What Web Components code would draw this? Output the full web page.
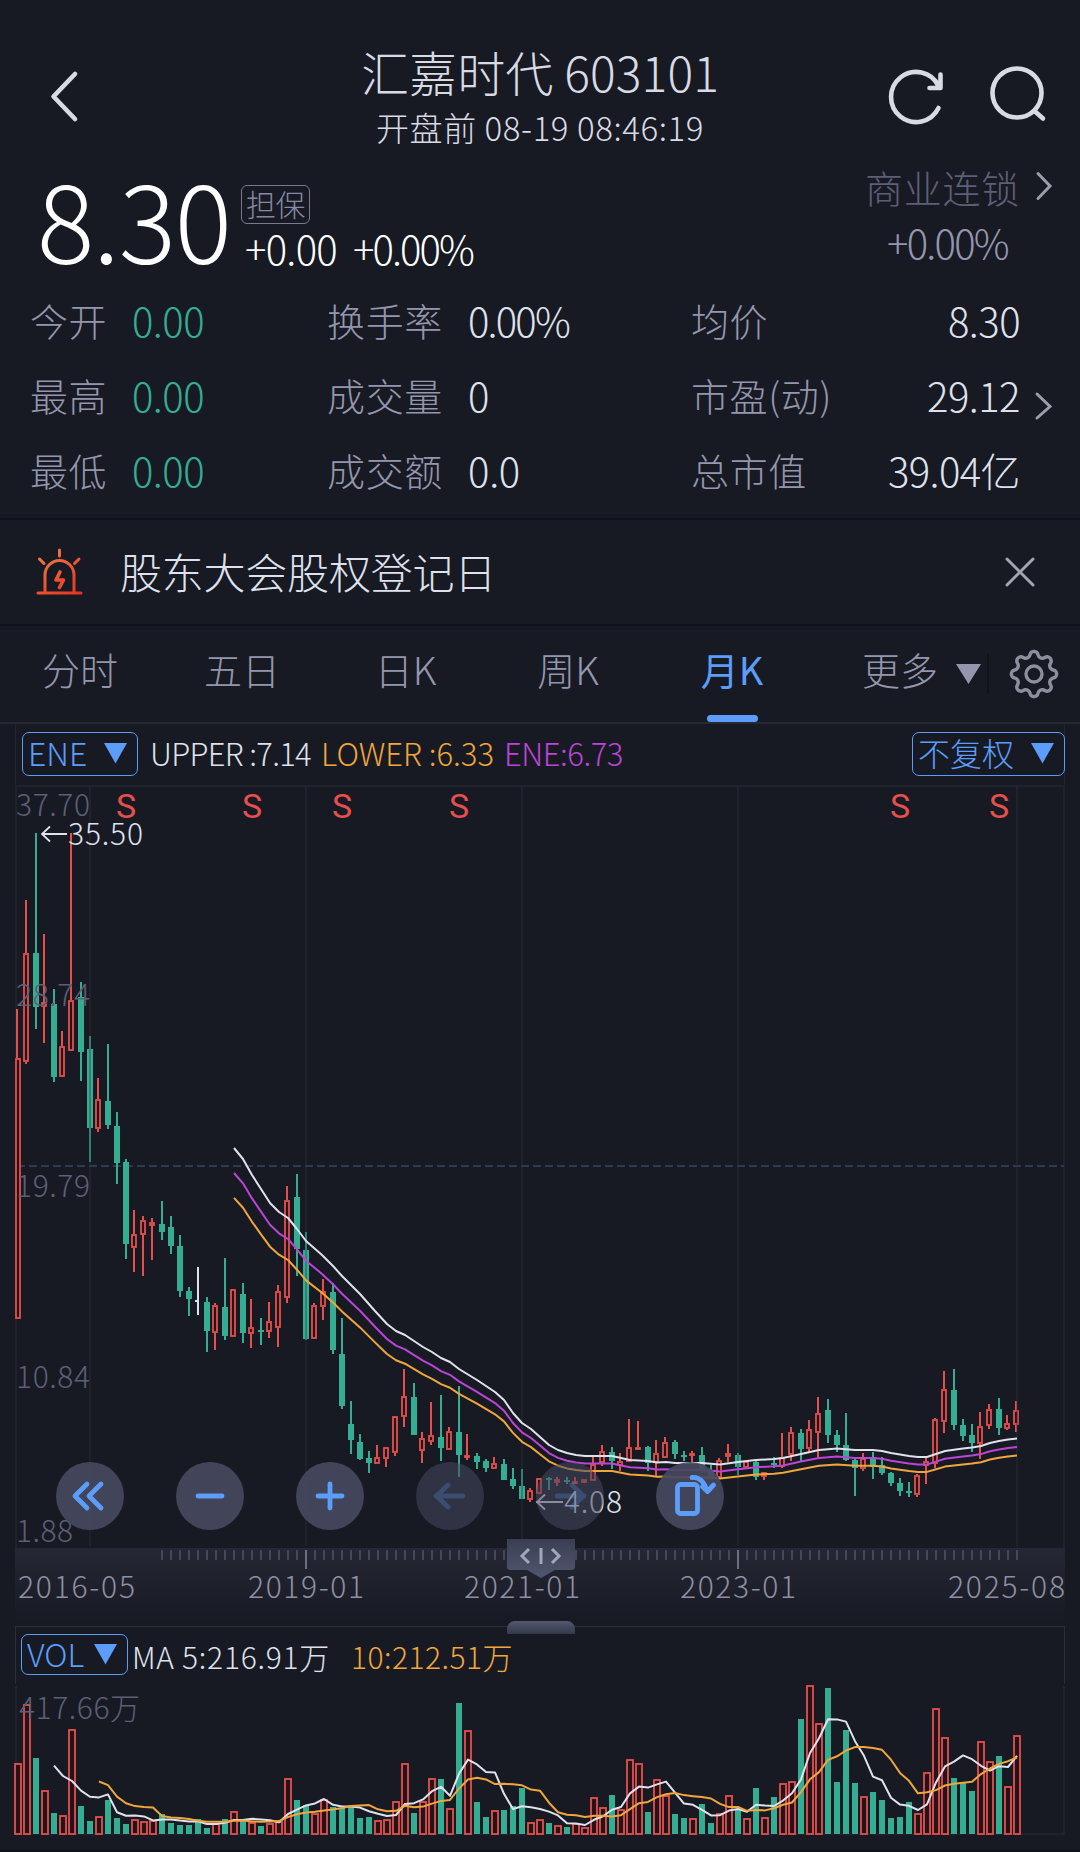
<!DOCTYPE html>
<html lang="zh-CN">
<head>
<meta charset="utf-8">
<title>汇嘉时代 603101</title>
<style>
    html, body {
        margin: 0;
        background: #171a23;
    }
    body {
        width: 1080px;
        height: 1852px;
        overflow: hidden;
        color: #dfe1ec;
        font-family: "Noto Sans CJK SC", sans-serif;
        font-weight: 300;
        --bg: #171a23;
        --muted: #9496ad;
        --dim: #5d5f76;
        --blue: #5c9dfa;
        --red: #e5504d;
        --green: #34ad92;
        --orange: #efa63c;
        --purple: #bb45d6;
    }
</style>
</head>
<body>
<stock-page></stock-page>

<script>
// Text that is tracked in or out until it takes the given width
class FitText extends HTMLElement {
    constructor() {
        super();
        this.attachShadow({ mode: "open" });
        this.shadowRoot.innerHTML = /*html*/ `
            <style>
                :host { display: inline-block; white-space: nowrap; line-height: 1; flex: none; }
                span { display: inline-block; white-space: pre; }
            </style>
            <span><slot></slot></span>
        `;
    }

    connectedCallback() {
        const width = parseFloat(this.getAttribute("width"));
        if (!width) return;
        const span = this.shadowRoot.querySelector("span");
        const size = parseFloat(this.getAttribute("size"));
        if (size) this.style.fontSize = size + "px";
        const natural = span.getBoundingClientRect().width;
        const gap = (width - natural) / this.textContent.length;
        span.style.letterSpacing = gap + "px";
        this.style.width = width + "px";
    }
}
customElements.define("fit-text", FitText);

class QuoteHeader extends HTMLElement {
    constructor() {
        super();
        this.attachShadow({ mode: "open" });
        this.shadowRoot.innerHTML = /*html*/ `
            <style>
                :host {
                    display: grid;
                    grid-template-columns: 270px 1fr 270px;
                    height: 160px;
                    color: #d8dae4;
                }
                svg { fill: none; stroke: currentColor; stroke-width: 4.6; stroke-linecap: round; stroke-linejoin: round; display: block; }
                .back { padding: 66px 0 0 44px; }
                .titles { display: flex; flex-direction: column; align-items: center; padding-top: 47px; gap: 16px; }
                .tools { display: flex; padding: 62px 0 0 72px; gap: 32px; }
            </style>
            <div class="back"><svg width="40" height="62" viewBox="0 0 40 62"><path d="M31 8 9.5 30.500 31 53"/></svg></div>
            <div class="titles">
                <fit-text size="48" width="358"><slot name="title"></slot></fit-text>
                <fit-text size="33" width="328"><slot name="time"></slot></fit-text>
            </div>
            <div class="tools">
                <svg width="70" height="70" viewBox="0 0 70 70"><path d="M56.500 46A25 25 0 1 1 56.500 24M58.500 12.500V26H47.500"/></svg>
                <svg width="70" height="70" viewBox="0 0 70 70"><circle cx="33" cy="31" r="24.500"/><path d="M50.500 49 59 56.500"/></svg>
            </div>
        `;
    }

    connectedCallback() {
        // the slotted text decides the width, so measure it from here
        this.shadowRoot.querySelectorAll("fit-text").forEach((fit) => {
            const slot = fit.querySelector("slot");
            const text = slot.assignedNodes().map((node) => node.textContent).join("");
            fit.textContent = text;
            fit.connectedCallback();
        });
    }
}
customElements.define("quote-header", QuoteHeader);

class PriceSummary extends HTMLElement {
    constructor() {
        super();
        this.attachShadow({ mode: "open" });
        this.shadowRoot.innerHTML = /*html*/ `
            <style>
                :host { display: flex; height: 126px; color: #fff; }
                .price { margin: 4px 0 0 37px; width: 204px; }
                .change { flex: 1; padding-top: 25px; }
                .tag {
                    display: inline-flex; align-items: center; justify-content: center;
                    box-sizing: border-box; width: 69px; height: 39px; padding-bottom: 3px;
                    border: 1.5px solid #787a92; border-radius: 6px; color: #8688a0;
                }
                .diff { display: flex; gap: 16px; padding: 4px 0 0 4px; }
                .sector { width: 215px; display: grid; grid-template-columns: 158px 1fr; align-content: start; padding-top: 8px; row-gap: 14px; }
                .name { color: var(--dim); }
                .rate { color: var(--muted); padding-left: 22px; }
                svg { fill: none; stroke: #9c9da9; stroke-width: 3; stroke-linecap: round; }
            </style>
            <div class="price"><fit-text size="107" width="194">8.30</fit-text></div>
            <div class="change">
                <div class="tag"><fit-text size="30" width="59">担保</fit-text></div>
                <div class="diff"><fit-text size="40" width="92">+0.00</fit-text><fit-text size="40" width="120">+0.00%</fit-text></div>
            </div>
            <div class="sector">
                <div class="name"><fit-text size="38" width="155">商业连锁</fit-text></div>
                <svg width="40" height="40"><path d="M15 5.500 27 18 15 30.500"/></svg>
                <div class="rate"><fit-text size="40" width="121">+0.00%</fit-text></div>
            </div>
        `;
    }
}
customElements.define("price-summary", PriceSummary);

class StatCell extends HTMLElement {
    constructor() {
        super();
        this.attachShadow({ mode: "open" });
    }

    connectedCallback() {
        const get = (name) => this.getAttribute(name) || "";
        this.shadowRoot.innerHTML = /*html*/ `
            <style>
                :host { display: flex; align-items: center; box-sizing: border-box; height: 75px; padding-bottom: 5px; }
                .label { color: var(--muted); width: ${get("label-box")}px; }
                .value { color: ${get("color") || "#dfe1ec"}; }
                :host([end]) { justify-content: space-between; }
            </style>
            <div class="label"><fit-text size="38" width="${get("label-width")}">${get("label")}</fit-text></div>
            <div class="value"><fit-text size="40" width="${get("value-width")}">${get("value")}</fit-text></div>
        `;
    }
}
customElements.define("stat-cell", StatCell);

class StatGrid extends HTMLElement {
    constructor() {
        super();
        this.attachShadow({ mode: "open" });
        this.shadowRoot.innerHTML = /*html*/ `
            <style>
                :host {
                    display: grid;
                    grid-template-columns: 297px 363px 330px 1fr;
                    height: 235px;
                    padding-left: 30px;
                    box-sizing: border-box;
                    align-content: start;
                    border-bottom: 2px solid #10131a;
                }
                .open { grid-column: 4; grid-row: 1 / 4; padding: 103px 0 0 11px; }
                svg { fill: none; stroke: #9c9da9; stroke-width: 3; stroke-linecap: round; }
            </style>
            <slot></slot>
            <div class="open"><svg width="40" height="40"><path d="M6 5 19 17.500 6 29"/></svg></div>
        `;
    }
}
customElements.define("stat-grid", StatGrid);

class EventNotice extends HTMLElement {
    constructor() {
        super();
        this.attachShadow({ mode: "open" });
        this.shadowRoot.innerHTML = /*html*/ `
            <style>
                :host {
                    display: flex; align-items: center; box-sizing: border-box;
                    height: 106px; padding: 0 45px 0 36px;
                    border-bottom: 2px solid #10131a;
                }
                .text { flex: 1; padding-left: 36px; }
                svg { fill: none; stroke-linecap: round; stroke-linejoin: round; display: block; }
            </style>
            <svg width="48" height="50" viewBox="0 0 48 50" stroke="url(#g)" stroke-width="3">
                <defs><linearGradient id="g" gradientUnits="userSpaceOnUse" x1="8" y1="4" x2="40" y2="48">
                    <stop offset="0" stop-color="#ee7c45"/><stop offset="1" stop-color="#e8341f"/>
                </linearGradient></defs>
                <path d="M2 46H45M9 46V28A14.500 14.500 0 0 1 38 28V46M23.500 3V9M3.500 12 8 16.500M43 12 38.500 16.500"/>
                <path d="M24 25 20 33H27.500L23.500 40.500" stroke-width="3.600"/>
            </svg>
            <div class="text"><fit-text size="42" width="376">股东大会股权登记日</fit-text></div>
            <svg width="30" height="30" stroke="#a3a4b1" stroke-width="3"><path d="M2 2 28 28M28 2 2 28"/></svg>
        `;
    }
}
customElements.define("event-notice", EventNotice);

class PeriodTab extends HTMLElement {
    constructor() {
        super();
        this.attachShadow({ mode: "open" });
        this.shadowRoot.innerHTML = /*html*/ `
            <style>
                :host { display: flex; flex-direction: column; align-items: center; justify-content: space-between; color: var(--muted); padding-top: 24px; box-sizing: border-box; height: 96px; font-size: 38px; line-height: 1; }
                :host([active]) { color: var(--blue); font-weight: 400; }
                i { width: 51px; height: 7px; border-radius: 3.5px; }
                :host([active]) i { background: var(--blue); }
            </style>
            <span><slot></slot></span><i></i>
        `;
    }
}
customElements.define("period-tab", PeriodTab);

class PeriodTabs extends HTMLElement {
    constructor() {
        super();
        this.attachShadow({ mode: "open" });
        // eight round teeth on a ring
        let gear = "";
        for (let i = 0; i <= 160; i++) {
            const angle = (i / 160) * Math.PI * 2;
            const wave = Math.cos(angle * 8);
            const r = 20 + 2.600 * Math.sign(wave) * Math.pow(Math.abs(wave), 0.600);
            gear += (i ? "L" : "M") + (26 + r * Math.sin(angle)).toFixed(2) + " " + (26 - r * Math.cos(angle)).toFixed(2);
        }
        this.shadowRoot.innerHTML = /*html*/ `
            <style>
                :host { display: grid; grid-template-columns: 162px 162px 165px 160px 168px 171px 1fr; height: 97px; margin-left: -1px; }
                .more { display: flex; padding-top: 24px; padding-left: 46px; gap: 18px; color: var(--muted); }
                .more svg { margin-top: 14px; }
                .set { display: flex; align-items: center; padding-left: 0; gap: 19px; height: 95px; }
                .bar { width: 2px; height: 41px; background: #10131a; }
            </style>
            <slot></slot>
            <div class="more"><fit-text size="38" width="76">更多</fit-text><svg width="25" height="21"><path fill="#9496ad" d="M0 0H25L12.500 20Z"/></svg></div>
            <div class="set"><div class="bar"></div>
                <svg width="52" height="52" fill="none" stroke="#8d8f9e" stroke-width="3.400" stroke-linejoin="round"><path d="${gear}Z"/><circle cx="26" cy="26" r="8"/></svg>
            </div>
        `;
    }
}
customElements.define("period-tabs", PeriodTabs);

class PickerButton extends HTMLElement {
    constructor() {
        super();
        this.attachShadow({ mode: "open" });
        this.shadowRoot.innerHTML = /*html*/ `
            <style>
                :host {
                    display: inline-flex; align-items: center; justify-content: space-between;
                    box-sizing: border-box; height: 44px; padding: 0 10px 0 5px;
                    border: 1.5px solid var(--blue); border-radius: 7px;
                    color: var(--blue); font-size: 32px; line-height: 1; white-space: nowrap;
                }
                span { padding-bottom: 4px; }
            </style>
            <span><slot></slot></span>
            <svg width="23" height="21"><path fill="#5c9dfa" d="M0 0H23L11.500 20.500Z"/></svg>
        `;
    }
}
customElements.define("picker-button", PickerButton);

// high, body top, body bottom, low as plot rows; r = up, g = down, w = flat
const candles = `
r1009,1058,1319,1319 r900,953,1062,1064 g833,953,1007,1029 r934,1002,1007,1043 g989,1004,1077,1082 r1031,1046,1077,1077
r833,1000,1051,1051 g982,997,1052,1081 g1036,1049,1128,1162 r1078,1099,1129,1132 g1044,1101,1125,1129 g1112,1126,1163,1184
g1159,1162,1244,1259 r1210,1234,1248,1272 r1216,1220,1235,1276 r1218,1222,1226,1260 g1201,1224,1232,1240 g1216,1227,1246,1254
g1235,1246,1291,1297 g1287,1291,1299,1316 w1267,1300,1302,1315 g1297,1302,1331,1352 r1303,1305,1333,1350 g1258,1307,1336,1340
r1289,1289,1337,1337 g1283,1294,1333,1343 r1299,1327,1334,1348 g1318,1330,1331,1345 r1302,1321,1332,1338 r1285,1291,1328,1347
r1186,1200,1298,1303 g1174,1197,1249,1276 g1232,1250,1339,1340 r1303,1305,1339,1339 r1279,1291,1307,1320 g1283,1292,1350,1354
g1318,1354,1406,1409 g1401,1424,1440,1454 g1434,1442,1459,1460 g1451,1458,1463,1473 r1445,1457,1464,1464 r1447,1447,1459,1467
r1416,1416,1453,1456 r1369,1396,1417,1427 g1383,1397,1435,1435 r1432,1438,1451,1463 r1402,1435,1442,1445 g1395,1437,1448,1461
r1427,1431,1450,1450 g1386,1432,1455,1477 r1434,1455,1457,1460 g1453,1456,1462,1469 g1459,1461,1468,1472 r1457,1463,1469,1469
g1459,1464,1480,1480 g1468,1479,1486,1489 g1469,1486,1499,1499 r1488,1490,1500,1502 r1478,1478,1494,1494 g1477,1478,1479,1490
r1477,1479,1483,1486 g1477,1480,1481,1484 r1477,1481,1482,1484 r1479,1479,1483,1483 r1456,1464,1481,1481 r1445,1451,1463,1466
g1447,1452,1461,1469 r1453,1461,1466,1471 r1419,1447,1462,1462 r1421,1447,1450,1450 g1446,1447,1463,1471 r1440,1453,1463,1477
r1437,1442,1458,1458 g1440,1442,1454,1459 g1451,1455,1456,1461 r1451,1453,1456,1464 g1447,1455,1470,1473 g1465,1470,1477,1477
r1458,1460,1478,1478 r1444,1453,1457,1462 g1453,1455,1467,1475 r1461,1461,1468,1468 g1461,1462,1477,1480 r1472,1472,1477,1480
g1457,1463,1464,1468 r1433,1457,1467,1468 r1427,1432,1455,1461 g1429,1433,1449,1461 r1420,1429,1449,1452 r1397,1413,1433,1459
g1399,1410,1435,1443 g1430,1435,1445,1452 g1413,1445,1460,1461 g1458,1460,1468,1496 r1453,1458,1469,1471 g1452,1457,1467,1479
g1457,1465,1473,1475 g1472,1473,1483,1486 g1478,1483,1491,1496 g1482,1491,1493,1497 r1474,1475,1495,1497 r1457,1461,1466,1484
r1418,1419,1464,1468 r1371,1389,1422,1433 g1369,1390,1425,1430 g1419,1425,1436,1441 g1424,1435,1443,1452 r1412,1426,1444,1459
r1404,1409,1426,1429 g1398,1409,1428,1435 r1415,1423,1429,1430 r1401,1410,1425,1432`.trim().split(/\s+/).map((item) => {
    const [high, top, bottom, low] = item.slice(1).split(",").map(Number);
    return { kind: item[0], high, top, bottom, low };
});

const volumes = [
    71, 130, 76, 44, 21, 19, 105, 28, 13, 18, 34, 16, 10, 15, 13, 14, 20, 11, 9, 9, 15, 6, 11, 15, 23, 15, 12, 8,
    11, 13, 56, 34, 29, 21, 35, 27, 26, 28, 16, 17, 14, 15, 33, 71, 21, 33, 56, 55, 26, 131, 104, 32, 17, 24, 24, 28,
    46, 12, 15, 11, 9, 7, 11, 7, 37, 27, 39, 25, 75, 71, 22, 55, 39, 20, 16, 16, 30, 11, 21, 39, 24, 16, 46, 17,
    37, 51, 53, 115, 149, 111, 146, 52, 104, 51, 38, 42, 34, 16, 17, 32, 21, 62, 126, 97, 56, 52, 43, 93, 73, 78, 48, 99
];

// upper ENE band; the other two follow from it
const upperBand = [
    [234, 1148], [243, 1159], [252, 1175], [261, 1189], [270, 1203], [279, 1212], [288, 1218], [297, 1229], [306, 1241],
    [322, 1255], [333, 1266], [342, 1276], [351, 1285], [360, 1294], [375, 1311], [387, 1324], [396, 1331], [405, 1335],
    [423, 1347], [432, 1352], [441, 1358], [450, 1362], [459, 1369], [477, 1380], [495, 1392], [504, 1400], [513, 1413],
    [522, 1423], [531, 1429], [540, 1437], [549, 1445], [558, 1450], [567, 1453], [576, 1455], [585, 1456], [612, 1456],
    [621, 1458], [630, 1460], [648, 1461], [657, 1462.5], [666, 1462], [675, 1463], [702, 1463], [720, 1464.5],
    [738, 1462], [756, 1460], [774, 1459], [783, 1458], [801, 1454], [819, 1450], [837, 1448.5], [855, 1450],
    [873, 1450], [882, 1451], [891, 1453], [909, 1456], [918, 1457], [927, 1457], [936, 1454], [945, 1451],
    [963, 1448.5], [972, 1447.5], [981, 1446], [990, 1443], [999, 1441], [1008, 1439.5], [1017, 1438.5]
];

const STEP = 9;
const FIRST = 18;
const centre = (i) => FIRST + i * STEP;
const toPrice = (y) => 35.5 - (y - 833) / 21.29;
const toRow = (price) => 833 + (35.5 - price) * 21.29;
const line = (points, color) =>
    `<polyline points="${points.map((p) => p.join(",")).join(" ")}" fill="none" stroke="${color}" stroke-width="2" stroke-linejoin="round"/>`;
const label = (x, y, width, text, color, size = 30) =>
    `<text x="${x}" y="${y}" textLength="${width}" fill="${color}" font-size="${size}">${text}</text>`;

class RoundButton extends HTMLElement {
    constructor() {
        super();
        this.attachShadow({ mode: "open" });
    }

    connectedCallback() {
        const icons = {
            first: "M31 22 19 34 31 46M45 22 33 34 45 46",
            minus: "M22 34H46",
            plus: "M22 34H46M34 22V46",
            left: "M47 34H20M32 23 20.500 34 32 45",
            right: "M21 34H48M36 23 47.500 34 36 45",
            rotate: "M24.500 22.500H38.500A3 3 0 0 1 41.500 25.500V48.500A3 3 0 0 1 38.500 51.500H24.500A3 3 0 0 1 21.500 48.500V25.500A3 3 0 0 1 24.500 22.500ZM36 15.500Q46.500 14.500 51 29M46.500 24.500 51.500 29.500 57.500 23"
        };
        this.shadowRoot.innerHTML = /*html*/ `
            <style>
                :host { display: block; width: 68px; height: 68px; border-radius: 50%; background: rgba(70, 73, 94, 0.92); }
                :host([disabled]) { background: rgba(70, 73, 94, 0.55); }
                svg { display: block; fill: none; stroke: var(--blue); stroke-width: 4.800; stroke-linecap: round; stroke-linejoin: round; }
                :host([disabled]) svg { opacity: 0.25; }
            </style>
            <svg width="68" height="68"><path d="${icons[this.getAttribute("icon")]}"/></svg>
        `;
    }
}
customElements.define("round-button", RoundButton);

class KlineChart extends HTMLElement {
    constructor() {
        super();
        this.attachShadow({ mode: "open" });
        this.shadowRoot.innerHTML = /*html*/ `
            <style>
                :host { display: block; height: 824px; border-top: 2px solid #262934; margin-top: -1px; position: relative; }
                .legend { display: flex; align-items: center; box-sizing: border-box; height: 62px; margin: 0 15px; padding: 0 0 2px 6px; border: 1px solid #222530; border-top: 0; border-right-width: 1px; }
                .legend picker-button:first-child { width: 116px; margin-right: 12px; }
                .legend picker-button:last-child { width: 153px; margin-left: auto; margin-right: -1px; }
                .legend fit-text { margin: 0 10px 2px 0; }
                .plot { display: block; overflow: visible; }
                .tools { position: absolute; left: 56px; top: 738px; display: flex; gap: 52px; }
            </style>
            <div class="legend">
                <picker-button>ENE</picker-button>
                <fit-text size="31" width="161">UPPER :7.14</fit-text>
                <fit-text size="31" width="173" style="color: var(--orange)">LOWER :6.33</fit-text>
                <fit-text size="31" width="119" style="color: var(--purple)">ENE:6.73</fit-text>
                <picker-button>不复权</picker-button>
            </div>
            <svg class="plot" width="1080" height="762" viewBox="0 786 1080 762">${this.draw()}</svg>
            <div class="tools">
                <round-button icon="first"></round-button>
                <round-button icon="minus"></round-button>
                <round-button icon="plus"></round-button>
                <round-button icon="left" disabled></round-button>
                <round-button icon="right" disabled></round-button>
                <round-button icon="rotate"></round-button>
            </div>
        `;
    }

    draw() {
        let out = `<g stroke="#20232e" stroke-width="2"><path d="M15 786H1065M16 786V1548M1064 786V1548"/></g>`;
        out += `<path d="M17 1166H1064" stroke="#2d3a52" stroke-width="2" stroke-dasharray="8 4"/>`;
        candles.forEach((c, i) => {
            const x = centre(i);
            if (c.kind === "g") {
                const h = Math.max(c.bottom - c.top, 2);
                out += `<path fill="#34ad92" d="M${x - 1} ${c.high}h2V${c.low}h-2ZM${x - 3} ${c.top}h6v${h}h-6Z"/>`;
            } else if (c.kind === "w") {
                out += `<path fill="#dfe1ec" d="M${x - 1} ${c.high}h2V${c.low}h-2ZM${x - 3} ${c.top}h3v2h-3Z"/>`;
            } else {
                const h = Math.max(c.bottom - c.top - 2, 1);
                const left = i ? x - 3 : x - 2;
                out += `<path fill="#e5504d" d="M${x - 2} ${c.high}h2V${c.top}h-2ZM${x - 2} ${c.bottom}h2V${c.low}h-2Z"/>`;
                out += `<rect x="${left}" y="${c.top + 1}" width="4" height="${h}" fill="#23141c" stroke="#e5504d" stroke-width="1.800"/>`;
            }
        });
        out += `<path stroke="#30323e" stroke-opacity="0.350" stroke-width="2" d="M90 786V1546M306 786V1546M522 786V1546M738 786V1546M1017 786V1546"/>`;
        const band = (k) => upperBand.map(([x, y]) => [x, toRow(toPrice(y) / 1.06 * k).toFixed(1)]);
        out += line(band(0.94), "#efa63c") + line(band(1), "#bb45d6") + line(band(1.06), "#dfe1ec");
        [["37.70", 816, 74], ["28.74", 1006, 74], ["19.79", 1197, 74], ["10.84", 1388, 74], ["1.88", 1542, 57]].forEach(([text, y, w]) => {
            out += label(16, y, w, text, "#5d5f76");
        });
        [126, 252, 342, 459, 900, 999].forEach((x) => {
            out += `<text x="${x}" y="818" text-anchor="middle" fill="#e5504d" font-size="34" font-weight="400" font-family="Roboto, sans-serif">S</text>`;
        });
        out += `<path d="M67 834H42M50 826.500 42 834 50 841.500M563 1502H537M545 1494.500 537 1502 545 1509.500" fill="none" stroke="#dfe1ec" stroke-width="1.800"/>`;
        out += label(68, 845, 75, "35.50", "#dfe1ec") + label(564, 1513, 58, "4.08", "#dfe1ec");
        return out;
    }
}
customElements.define("kline-chart", KlineChart);

class TimeAxis extends HTMLElement {
    constructor() {
        super();
        this.attachShadow({ mode: "open" });
        let ticks = "";
        for (let x = 162; x <= 1017; x += STEP) {
            ticks += `M${x} 2v10`;
        }
        this.shadowRoot.innerHTML = /*html*/ `
            <style>
                :host { display: block; height: 78px; position: relative; }
                .strip { display: block; }
                .handle { position: absolute; left: 500px; top: -12px; }
            </style>
            <svg class="strip" width="1080" height="78">
                <defs><linearGradient id="fade" x1="0" y1="0" x2="0" y2="1">
                    <stop offset="0" stop-color="#252834"/><stop offset="1" stop-color="#171a23"/>
                </linearGradient></defs>
                <rect x="15" y="0" width="1050" height="74" fill="url(#fade)"/>
                <path d="${ticks}" stroke="#444757" stroke-width="2"/>
                <path d="M306 2v19M738 2v19" stroke="#6d6f80" stroke-width="2"/>
                ${label(18, 50, 117, "2016-05", "#8d8fa3")}
                ${label(248, 50, 116, "2019-01", "#8d8fa3")}
                ${label(464, 50, 116, "2021-01", "#8d8fa3")}
                ${label(680, 50, 116, "2023-01", "#8d8fa3")}
                ${label(948, 50, 117, "2025-08", "#8d8fa3")}
            </svg>
            <svg class="handle" width="82" height="46" fill="none" stroke="#a3a6bb" stroke-width="3">
                <defs><linearGradient id="knob" x1="0" y1="0" x2="0" y2="1">
                    <stop offset="0" stop-color="#3a3f53"/><stop offset="1" stop-color="#50566e"/>
                </linearGradient></defs>
                <path d="M7 3H75V31Q75 34 71 34H55L41 42 27 34H11Q7 34 7 31Z" fill="url(#knob)" stroke="none"/>
                <path d="M29 13 22 20 29 27M41 12V28M52 13 59 20 52 27"/>
            </svg>
        `;
    }
}
customElements.define("time-axis", TimeAxis);

class VolumeChart extends HTMLElement {
    constructor() {
        super();
        this.attachShadow({ mode: "open" });
        this.shadowRoot.innerHTML = /*html*/ `
            <style>
                :host { display: block; position: relative; }
                .legend { display: flex; align-items: flex-start; box-sizing: border-box; height: 58px; margin: 0 15px; padding: 7px 0 0 5px; border: 1px solid #2a2d3a; border-bottom: 0; }
                picker-button { width: 107px; height: 41px; margin-right: 4px; }
                fit-text { margin: 7px 21px 0 0; }
                .plot { display: block; }
                .grip { position: absolute; left: 507px; top: -5px; width: 68px; height: 13px; border-radius: 8px 8px 0 0; background: linear-gradient(#53586f, #33384a); }
            </style>
            <div class="legend">
                <picker-button>VOL</picker-button>
                <fit-text size="30" width="198">MA 5:216.91万</fit-text>
                <fit-text size="30" width="162" style="color: var(--orange)">10:212.51万</fit-text>
            </div>
            <svg class="plot" width="1080" height="168" viewBox="0 1684 1080 168">${this.draw()}</svg>
            <div class="grip"></div>
        `;
    }

    draw() {
        const base = 1834;
        let out = `<path d="M16 1686V1834H1064V1686" fill="none" stroke="#20232e" stroke-width="2"/>`;
        volumes.forEach((v, i) => {
            const x = centre(i);
            if (candles[i].kind === "r") {
                out += `<rect x="${x - 3}" y="${base - v + 1}" width="6" height="${v - 1}" fill="#23141c" stroke="#e5504d" stroke-width="1.800"/>`;
            } else {
                out += `<rect x="${x - 3}" y="${base - v}" width="6" height="${v}" fill="#34ad92"/>`;
            }
        });
        const average = (n) => volumes.slice(n - 1).map((_, k) => {
            const sum = volumes.slice(k, k + n).reduce((a, b) => a + b, 0);
            return [centre(k + n - 1), base - sum / n];
        });
        out += line(average(5), "#dfe1ec") + line(average(10), "#efa63c");
        out += label(19, 1719, 121, "417.66万", "#5d5f76");
        out += `<path d="M0 1851H1080" stroke="#10131a" stroke-width="2"/>`;
        return out;
    }
}
customElements.define("volume-chart", VolumeChart);

class StockPage extends HTMLElement {
    constructor() {
        super();
        this.attachShadow({ mode: "open" });
        this.shadowRoot.innerHTML = /*html*/ `
            <style>
                :host { display: flex; flex-direction: column; width: 1080px; height: 1852px; background: var(--bg); }
            </style>
            <quote-header><span slot="title">汇嘉时代 603101</span><span slot="time">开盘前 08-19 08:46:19</span></quote-header>
            <price-summary></price-summary>
            <stat-grid>
                <stat-cell label="今开" label-box="102" label-width="77" value="0.00" value-width="72" color="var(--green)"></stat-cell>
                <stat-cell label="换手率" label-box="141" label-width="116" value="0.00%" value-width="101"></stat-cell>
                <stat-cell end label="均价" label-box="150" label-width="77" value="8.30" value-width="72" style="margin-left: 1px"></stat-cell>
                <stat-cell label="最高" label-box="102" label-width="77" value="0.00" value-width="72" color="var(--green)" style="grid-column: 1"></stat-cell>
                <stat-cell label="成交量" label-box="141" label-width="116" value="0" value-width="22"></stat-cell>
                <stat-cell end label="市盈(动)" label-box="150" label-width="141" value="29.12" value-width="93" style="margin-left: 1px"></stat-cell>
                <stat-cell label="最低" label-box="102" label-width="77" value="0.00" value-width="72" color="var(--green)" style="grid-column: 1"></stat-cell>
                <stat-cell label="成交额" label-box="141" label-width="116" value="0.0" value-width="52"></stat-cell>
                <stat-cell end label="总市值" label-box="150" label-width="116" value="39.04亿" value-width="132" style="margin-left: 1px"></stat-cell>
            </stat-grid>
            <event-notice></event-notice>
            <period-tabs>
                <period-tab>分时</period-tab>
                <period-tab>五日</period-tab>
                <period-tab>日K</period-tab>
                <period-tab>周K</period-tab>
                <period-tab active>月K</period-tab>
            </period-tabs>
            <kline-chart></kline-chart>
            <time-axis></time-axis>
            <volume-chart></volume-chart>
        `;
    }
}
customElements.define("stock-page", StockPage);
</script>
</body>
</html>
